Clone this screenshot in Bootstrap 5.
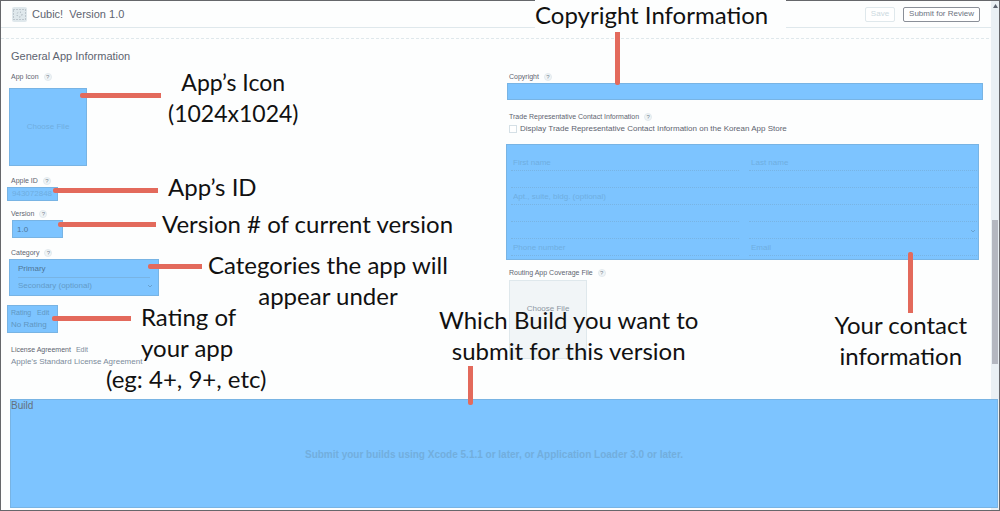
<!DOCTYPE html>
<html lang="en">
<head>
<meta charset="utf-8">
<meta name="viewport" content="width=device-width, initial-scale=1">
<title>Cubic! Version 1.0</title>
<link href="https://cdn.jsdelivr.net/npm/bootstrap@5.3.0/dist/css/bootstrap.min.css" rel="stylesheet">
<style>
  :root { --hl: #7dc4ff; --hl-edge: #78b4e4; --hl-text: #6faedf; --rule: #dfe8ec; --arrow: #e36a5c; --ink: #5d6470; }
  body { font-family: "Liberation Sans", Arial, sans-serif; font-size: 8px; line-height: 12px; color: var(--ink); background: #fdfefe; }
  .frame { border: 1px solid #66676b; min-height: 100vh; }
  .app-header { height: 27px; padding: 0 19px 0 10px; border-bottom: 1px solid var(--rule); font-size: 11px; }
  .app-header button { height: 15px; font-size: 8px; line-height: 12px; border-radius: 2px; padding: 0 5px; background: #fff; border: 1px solid #8a8f98; color: #6c7480; }
  .app-header .save { border-color: var(--rule); color: #ccd9e0; }
  .subline { height: 11px; border-bottom: 1px dashed var(--rule); }
  .section-title { font-size: 11px; line-height: 14px; margin: 10px 0 8px 10px; font-weight: 400; }
  .left-col { padding-left: 8px; }
  .right-col { padding-left: 7px; padding-right: 8px; }
  .field-label { font-size: 7px; line-height: 12px; height: 12px; margin-left: 2px; display: flex; align-items: center; gap: 5px; }
  .help { width: 8px; height: 8px; border: 1px solid #e3eaee; border-radius: 50%; background: #f0f5f7; font-size: 6px; line-height: 6px; text-align: center; color: #7b8794; }
  .hl { background-color: var(--hl); border: 1px solid var(--hl-edge); border-radius: 0; color: #4e7698; font-size: 8px; line-height: 12px; }
  .icon-field { margin: 5px 0 9px; }
  .icon-drop { width: 78px; height: 78px; color: var(--hl-text); padding: 0; }
  .id-box { width: 51px; height: 14px; margin-left: -2px; padding: 0 4px; color: var(--hl-text); }
  .version-box { width: 51px; height: 18px; margin-left: 3px; padding: 0 4px; }
  .category-box { width: 150px; height: 37px; padding: 0 8px; }
  .category-box select { display: block; width: 100%; height: 17px; border: 0; padding: 0; background: transparent; color: inherit; appearance: none; font-size: 8px; line-height: 12px; }
  .category-box select + select { border-top: 1px solid var(--hl-edge); color: #639bc8; }
  .category-box svg { right: 5px; bottom: 7px; }
  .rating-box { width: 51px; height: 28px; margin-left: -2px; padding: 1px 3px; color: #5f96c1; white-space: nowrap; font-size: 8px; }
  .rating-head { font-size: 7px; }
  .gap-tight { margin-top: 7px; }
  .gap-field { margin-top: 9px; }
  .gap-wide { margin-top: 11px; }
  a { color: #7c8b9b; text-decoration: none; }
  .license { margin-left: 2px; }
  .copy-box { width: 100%; height: 17px; display: block; }
  .contact { margin: 9px 4px 0 -1px; padding: 9px 1px 2px 4px; height: 116px; }
  .contact input, .contact select { border: 0; border-bottom: 1px dotted var(--hl-edge); background: transparent; height: 17px; min-width: 0; padding: 0 2px; font-size: 8px; border-radius: 0; appearance: none; }
  .contact input::placeholder { color: var(--hl-text); opacity: 1; }
  .contact .pair { display: grid; grid-template-columns: 1fr 1fr; gap: 10px; }
  .contact .pair > *, .contact .whole { width: 100%; display: block; }
  .contact svg { right: 1px; top: 7px; }
  .korean-row { margin-left: 2px; gap: 3px; }
  input[type=checkbox].korean { width: 8px; height: 8px; margin: 0; appearance: none; border: 1px solid #d5e0e6; background: #fff; }
  .route-drop { width: 78px; height: 79px; margin: 1px 0 0 2px; padding: 0 0 22px; border: 1px solid var(--rule); background: #f1f5f7; color: #8d97a3; font-size: 8px; }
  .build { position: relative; z-index: 2; height: 109px; margin: 31px 1px 0 9px; color: #64707c; }
  .build h2 { font-size: 10px; line-height: 12px; font-weight: 400; margin: 0; }
  .build p { font-size: 10px; line-height: 14px; font-weight: 700; color: #72aedd; margin: 0; padding: 36px 20px 0 0; }
  .scroll-track { right: 0; top: 0; bottom: 0; width: 8px; background: #eaf0f4; }
  .scroll-thumb { position: absolute; top: 43%; height: 144px; right: 1px; width: 6px; background: #b4b7c0; }
  .scroll-track svg { position: absolute; top: 3px; left: 2px; }
  /* Callouts lie over the form */
  .note { position: absolute; z-index: 3; display: flex; white-space: nowrap; color: #111; font: 24px/31px Lato, Carlito, Calibri, sans-serif; text-align: center; pointer-events: none; }
  .bar { background: var(--arrow); flex: none; height: 5px; border-radius: 2px 0 0 2px; }
  .bar-v { background: var(--arrow); width: 5px; border-radius: 0 0 2px 2px; }
  .n-copy { left: 28px; top: -84px; flex-direction: column; }
  .n-copy span { background: #fdfefe; padding-right: 18px; height: 30px; margin-top: 1px; line-height: 29px; }
  .n-copy .bar-v { height: 53px; margin: 2px 0 0 80px; }
  .n-icon { left: 71px; top: -21px; font-size: 23px; }
  .n-icon .bar { width: 81px; margin: 26px 7px 0 0; }
  .n-id { left: 44px; top: -16px; }
  .n-id .bar { width: 105px; margin: 17px 10px 0 0; }
  .n-version { left: 49px; top: -12px; }
  .n-version .bar { width: 98px; margin: 14px 6px 0 0; }
  .n-category { left: 139px; top: -10px; }
  .n-category .bar { width: 54px; margin: 15px 6px 0 0; }
  .n-rating { left: 43px; top: -4px; }
  .n-rating .bar { width: 79px; margin: 15px 10px 0 0; }
  .n-rating .eg { margin-left: -35px; display: block; }
  .n-contact { right: 11px; bottom: -112px; flex-direction: column; }
  .n-contact .bar-v { height: 61px; margin: 0 0 -4px 73px; border-radius: 2px 2px 0 0; }
  .n-build { left: 428px; top: -96px; flex-direction: column; }
  .n-build .bar-v { height: 39px; margin: 0 0 0 29px; }
</style>
</head>
<body>
<div class="frame position-relative">
  <header class="app-header d-flex align-items-center">
    <svg width="17" height="17" viewBox="0 0 17 17" class="me-1" aria-hidden="true"><rect x="1" y="1" width="15" height="15" rx="2" fill="#dfe8ec"/><g fill="none" stroke="#9ba5ae" stroke-dasharray="1 2"><rect x="2.500" y="3.500" width="12" height="10"/><circle cx="8.500" cy="8.500" r="2.500"/></g></svg>
    <span>Cubic!&nbsp; Version 1.0</span>
    <div class="ms-auto d-flex gap-2">
      <button type="button" class="save">Save</button>
      <button type="button">Submit for Review</button>
    </div>
  </header>
  <div class="subline"></div>

  <main>
    <h1 class="section-title">General App Information</h1>
    <div class="row g-0">
      <div class="col-6 left-col">
        <div class="field-label"><span>App Icon</span><span class="help">?</span></div>
        <div class="position-relative icon-field">
          <button type="button" class="hl icon-drop d-block">Choose File</button>
          <div class="note n-icon"><i class="bar"></i><span>App’s Icon<br>(1024x1024)</span></div>
        </div>
        <div class="field-label"><span>Apple ID</span><span class="help">?</span></div>
        <div class="position-relative">
          <div class="hl id-box">943072848</div>
          <div class="note n-id"><i class="bar"></i><span>App’s ID</span></div>
        </div>
        <div class="field-label gap-tight"><label for="version">Version</label><span class="help">?</span></div>
        <div class="position-relative">
          <input id="version" class="hl version-box d-block" value="1.0">
          <div class="note n-version"><i class="bar"></i><span>Version # of current version</span></div>
        </div>
        <div class="field-label gap-field"><label for="primary">Category</label><span class="help">?</span></div>
        <div class="position-relative">
          <div class="hl category-box position-relative">
            <select id="primary"><option>Primary</option></select>
            <select aria-label="Secondary category"><option>Secondary (optional)</option></select>
            <svg class="position-absolute" width="6" height="4" viewBox="0 0 6 4"><path d="M1 1l2 2 2-2" fill="none" stroke="#68a2d0"/></svg>
          </div>
          <div class="note n-category"><i class="bar"></i><span>Categories the app will<br>appear under</span></div>
        </div>
        <div class="position-relative gap-field">
          <div class="hl rating-box"><span class="rating-head">Rating &nbsp; Edit</span><br>No Rating</div>
          <div class="note n-rating"><i class="bar"></i><span class="text-start">Rating of<br>your app<br><span class="eg">(eg: 4+, 9+, etc)</span></span></div>
        </div>
        <div class="field-label gap-wide"><span>License Agreement</span><a href="#">Edit</a></div>
        <a href="#" class="license d-block">Apple's Standard License Agreement</a>
      </div>

      <div class="col-6"><div class="right-col me-2">
        <div class="field-label"><label for="copyright">Copyright</label><span class="help">?</span></div>
        <div class="position-relative">
          <input id="copyright" class="hl copy-box">
          <div class="note n-copy"><span>Copyright Information</span><i class="bar-v"></i></div>
        </div>
        <div class="field-label gap-wide"><span>Trade Representative Contact Information</span><span class="help">?</span></div>
        <div class="korean-row d-flex align-items-center">
          <input type="checkbox" class="korean" id="korean"><label for="korean">Display Trade Representative Contact Information on the Korean App Store</label>
        </div>
        <div class="hl contact position-relative">
          <div class="pair"><input placeholder="First name" aria-label="First name"><input placeholder="Last name" aria-label="Last name"></div>
          <input class="whole" aria-label="Street address">
          <input class="whole" placeholder="Apt., suite, bldg. (optional)" aria-label="Apartment">
          <div class="pair"><input aria-label="City"><input aria-label="State"></div>
          <div class="pair"><input aria-label="Postal code"><div class="position-relative"><select class="w-100 d-block" aria-label="Country"><option></option></select><svg class="position-absolute" width="6" height="4" viewBox="0 0 6 4"><path d="M1 1l2 2 2-2" fill="none" stroke="#68a2d0"/></svg></div></div>
          <div class="pair"><input placeholder="Phone number" aria-label="Phone number"><input placeholder="Email" aria-label="Email"></div>
          <div class="note n-contact"><i class="bar-v"></i><span>Your contact<br>information</span></div>
        </div>
        <div class="field-label gap-tight"><span>Routing App Coverage File</span><span class="help">?</span></div>
        <button type="button" class="route-drop d-block">Choose File</button>
      </div></div>
    </div>

    <section class="hl build">
      <h2>Build</h2>
      <p class="text-center">Submit your builds using Xcode 5.1.1 or later, or Application Loader 3.0 or later.</p>
      <div class="note n-build"><span>Which Build you want to<br>submit for this version</span><i class="bar-v"></i></div>
    </section>
  </main>
  <div class="scroll-track position-absolute"><svg width="5" height="4" viewBox="0 0 5 4"><path d="M0 4L2.500 0 5 4z" fill="#5d6470"/></svg><div class="scroll-thumb"></div></div>
</div>
<script src="https://cdn.jsdelivr.net/npm/bootstrap@5.3.0/dist/js/bootstrap.bundle.min.js"></script>
</body>
</html>
